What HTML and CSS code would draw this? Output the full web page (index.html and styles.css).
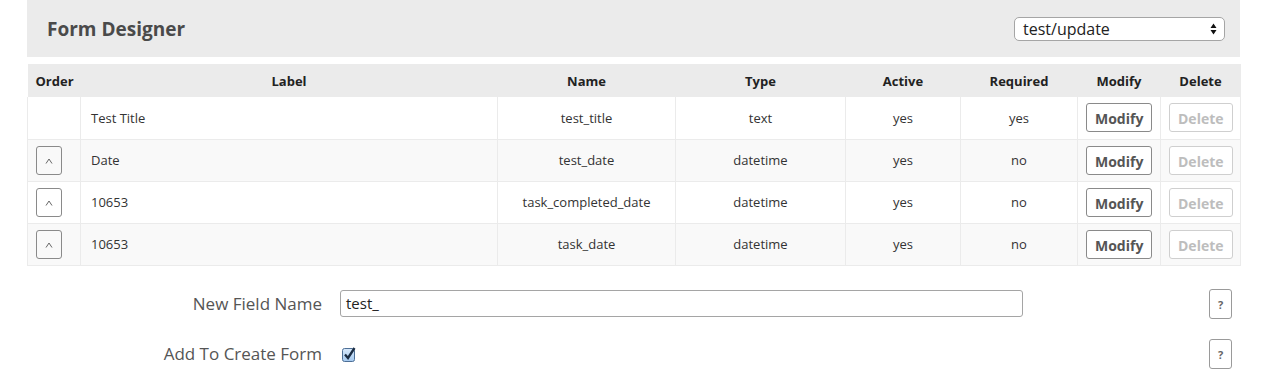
FILE: index.html
```html
<!DOCTYPE html>
<html lang="en">
<head>
  <meta charset="UTF-8" />
  <title>Form Designer</title>
  <link rel="stylesheet" href="styles.css">
</head>
<body>
  <div class="pagina">
    <!-- Cabecera -->
    <div class="panel">
      <h1>Form Designer</h1>
      <div class="selector">
        <span>test/update</span>
        <svg width="7" height="12" viewBox="0 0 7 12"><path d="M3.5 0.5L6.5 5H0.5Z M3.5 11.5L0.5 7H6.5Z" fill="#111"/></svg>
      </div>
    </div>

    <!-- Tabla de campos -->
    <table class="campos">
      <colgroup>
        <col style="width:53px"><col style="width:417px"><col style="width:178px"><col style="width:170px">
        <col style="width:115px"><col style="width:117px"><col style="width:83px"><col style="width:80px">
      </colgroup>
      <thead>
        <tr>
          <th class="izq">Order</th><th>Label</th><th>Name</th><th>Type</th>
          <th>Active</th><th>Required</th><th>Modify</th><th>Delete</th>
        </tr>
      </thead>
      <tbody>
        <tr>
          <td class="orden"></td><td class="etiqueta">Test Title</td><td>test_title</td><td>text</td>
          <td>yes</td><td>yes</td>
          <td><span class="boton">Modify</span></td><td><span class="boton apagado">Delete</span></td>
        </tr>
        <tr>
          <td class="orden"><span class="subir"><svg width="8" height="6" viewBox="0 0 8 6"><path d="M1 5.5L4 1L7 5.5" fill="none" stroke="#666" stroke-width="1"/></svg></span></td>
          <td class="etiqueta">Date</td><td>test_date</td><td>datetime</td>
          <td>yes</td><td>no</td>
          <td><span class="boton">Modify</span></td><td><span class="boton apagado">Delete</span></td>
        </tr>
        <tr>
          <td class="orden"><span class="subir"><svg width="8" height="6" viewBox="0 0 8 6"><path d="M1 5.5L4 1L7 5.5" fill="none" stroke="#666" stroke-width="1"/></svg></span></td>
          <td class="etiqueta">10653</td><td>task_completed_date</td><td>datetime</td>
          <td>yes</td><td>no</td>
          <td><span class="boton">Modify</span></td><td><span class="boton apagado">Delete</span></td>
        </tr>
        <tr>
          <td class="orden"><span class="subir"><svg width="8" height="6" viewBox="0 0 8 6"><path d="M1 5.5L4 1L7 5.5" fill="none" stroke="#666" stroke-width="1"/></svg></span></td>
          <td class="etiqueta">10653</td><td>task_date</td><td>datetime</td>
          <td>yes</td><td>no</td>
          <td><span class="boton">Modify</span></td><td><span class="boton apagado">Delete</span></td>
        </tr>
      </tbody>
    </table>

    <!-- Formulario nuevo campo -->
    <div class="formulario">
      <div class="fila">
        <label class="rotulo">New Field Name</label>
        <div class="entrada">test_</div>
        <span class="ayuda">?</span>
      </div>
      <div class="fila">
        <label class="rotulo">Add To Create Form</label>
        <div class="casilla">
          <svg width="16" height="16" viewBox="0 0 16 16">
            <defs>
              <linearGradient id="gc" x1="0" y1="0" x2="0" y2="1">
                <stop offset="0" stop-color="#d9eafc"/>
                <stop offset="1" stop-color="#a3c8ee"/>
              </linearGradient>
            </defs>
            <rect x="0.5" y="2.5" width="12" height="13" rx="2" fill="url(#gc)" stroke="#4d6f96"/>
            <path d="M3 8.5L6 12L12.5 2" fill="none" stroke="#1b2d44" stroke-width="2.3"/>
          </svg>
        </div>
        <span class="ayuda">?</span>
      </div>
    </div>
  </div>
</body>
</html>
```

FILE: styles.css
```css
/* ---------- Base ---------- */
*{box-sizing:border-box}
body{
  margin:0;
  font-family:"Open Sans","Noto Sans",sans-serif;
  color:#333;
  background:#fff;
}
.pagina{
  margin:0 40px 0 27px;
}

/* ---------- Cabecera ---------- */
.panel{
  height:57px;
  background:#ebebeb;
  display:flex;
  align-items:center;
  justify-content:space-between;
  padding:0 15px 0 20px;
}
.panel h1{
  margin:0;
  font-size:19px;
  font-weight:700;
  color:#4a4a4a;
}
.selector{
  width:211px;
  height:24px;
  border:1px solid #a5a5a5;
  border-radius:5px;
  background:#fff;
  display:flex;
  align-items:center;
  justify-content:space-between;
  padding:0 7px 0 8px;
  font-size:16px;
  color:#222;
}

/* ---------- Tabla ---------- */
.campos{
  margin-top:7px;
  width:100%;
  border-collapse:collapse;
  table-layout:fixed;
  font-size:13px;
}
.campos th{
  height:33px;
  background:#ebebeb;
  font-weight:700;
  color:#222;
  text-align:center;
  padding:0 8px;
}
.campos th.izq{text-align:left}
.campos td{
  height:42px;
  text-align:center;
  padding:0 8px;
  border:1px solid #ebebeb;
  border-top:none;
}
.campos tbody tr:nth-child(even) td{background:#f9f9f9}
.campos td.etiqueta{text-align:left;padding-left:10px}
.campos td.orden{text-align:left;padding-left:8px}

.subir{
  display:inline-flex;
  align-items:center;
  justify-content:center;
  width:26px;
  height:29px;
  border:1px solid #8a8a8a;
  border-radius:3px;
  vertical-align:middle;
  padding-top:2px;
}
.boton{
  display:inline-block;
  border:1px solid #8a8a8a;
  border-radius:3px;
  padding:6px 8px 3px;
  font-weight:700;
  font-size:14px;
  line-height:18px;
  color:#555;
  background:#fff;
  vertical-align:middle;
}
.boton.apagado{
  border-color:#cfcfcf;
  color:#bdbdbd;
}

/* ---------- Formulario ---------- */
.formulario{
  margin-top:23px;
  display:flex;
  flex-direction:column;
  gap:20px;
}
.fila{
  display:flex;
  align-items:center;
  height:30px;
}
.rotulo{
  width:295px;
  text-align:right;
  font-size:17px;
  color:#555;
  margin-right:18px;
}
.entrada{
  width:683px;
  height:27px;
  border:1px solid #a5a5a5;
  border-radius:3px;
  padding:0 5px;
  font-size:15px;
  line-height:25px;
  color:#222;
}
.casilla{
  width:683px;
  display:flex;
  align-items:center;
  padding-left:2px;
}
.ayuda{
  margin-left:auto;
  margin-right:8px;
  width:23px;
  height:30px;
  border:1px solid #9a9a9a;
  border-radius:3px;
  display:flex;
  align-items:center;
  justify-content:center;
  font-size:11px;
  font-weight:700;
  color:#666;
  padding-top:2px;
}
```
